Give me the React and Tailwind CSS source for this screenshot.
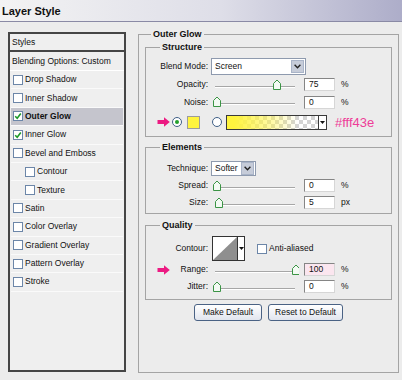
import React from 'react';

const STYLE_ITEMS = [
  { label: 'Drop Shadow' },
  { label: 'Inner Shadow' },
  { label: 'Outer Glow', checked: true, active: true },
  { label: 'Inner Glow', checked: true },
  { label: 'Bevel and Emboss' },
  { label: 'Contour', indent: true },
  { label: 'Texture', indent: true },
  { label: 'Satin' },
  { label: 'Color Overlay' },
  { label: 'Gradient Overlay' },
  { label: 'Pattern Overlay' },
  { label: 'Stroke' },
];

function Checkbox({ checked }) {
  return (
    <span className="flex h-[10px] w-[10px] shrink-0 items-center justify-center border border-[#6c86a8] bg-white">
      {checked && (
        <svg width="8" height="8" viewBox="0 0 8 8">
          <path d="M1.2 4.2 L3.2 6.2 L6.8 1.6" fill="none" stroke="#1d9a2a" strokeWidth="1.6" />
        </svg>
      )}
    </span>
  );
}

function Radio({ selected }) {
  return (
    <span className="flex h-[10px] w-[10px] shrink-0 items-center justify-center rounded-full border border-[#3f5f86] bg-white">
      {selected && <span className="h-[4px] w-[4px] rounded-full bg-[#23a02c]" />}
    </span>
  );
}

function PinkArrow() {
  return (
    <svg width="13" height="10" viewBox="0 0 13 10" className="shrink-0">
      <path d="M0.5 3 H7 V0.3 L12.8 5 L7 9.7 V7 H0.5 Z" fill="#ec1a82" />
    </svg>
  );
}

function Chevron() {
  return (
    <svg width="7" height="5" viewBox="0 0 7 5">
      <path d="M0.6 0.8 L3.5 3.8 L6.4 0.8" fill="none" stroke="#222" strokeWidth="1.4" />
    </svg>
  );
}

function TinyArrow() {
  return (
    <svg width="5" height="3" viewBox="0 0 5 3">
      <path d="M0 0 H5 L2.5 3 Z" fill="#111" />
    </svg>
  );
}

function Slider({ at }) {
  return (
    <svg width="86" height="12" viewBox="0 0 86 12" className="shrink-0">
      <line x1="2" y1="7.5" x2="82" y2="7.5" stroke="#a6a6a6" />
      <line x1="2" y1="8.5" x2="82" y2="8.5" stroke="#ffffff" />
      <path
        d={`M${at - 3.5} 10.5 V4.5 L${at} 1 L${at + 3.5} 4.5 V10.5 Z`}
        fill="#f3faf3"
        stroke="#3b9445"
      />
    </svg>
  );
}

function Label({ children, arrow }) {
  return (
    <div className="flex w-[62px] shrink-0 items-center">
      {arrow && (
        <span className="ml-[11px]">
          <PinkArrow />
        </span>
      )}
      <span className="ml-auto">{children}</span>
    </div>
  );
}

function ValueBox({ value, highlight }) {
  return (
    <div
      className={`ml-[5px] flex h-[13px] w-[31px] items-center border border-t-[#858585] border-l-[#858585] border-r-[#d6d6d6] border-b-[#d6d6d6] pl-[4px] ${highlight ? 'bg-[#fbe6ef]' : 'bg-white'}`}
    >
      {value}
    </div>
  );
}

function SliderRow({ label, at, value, unit, arrow, highlight }) {
  return (
    <div className="flex h-[17px] items-center">
      <Label arrow={arrow}>{label}</Label>
      <div className="ml-[5px] flex">
        <Slider at={at} />
      </div>
      <ValueBox value={value} highlight={highlight} />
      <span className="ml-[6px]">{unit}</span>
    </div>
  );
}

function Select({ value, className }) {
  return (
    <div className={`ml-[3px] flex items-center border border-[#8e9aae] bg-white ${className}`}>
      <span className="flex-1 pl-[3px]">{value}</span>
      <span className="mr-[1px] flex h-[13px] w-[13px] items-center justify-center border border-[#a9b4c8] bg-[#c6ccd9]">
        <Chevron />
      </span>
    </div>
  );
}

function Group({ title, children, className }) {
  return (
    <fieldset className={`border border-[#a4a4a4] ${className}`}>
      <legend className="ml-[14px] px-[2px] text-[9px] font-bold leading-[12px]">{title}</legend>
      {children}
    </fieldset>
  );
}

export default function App() {
  return (
    <div className="h-[380px] w-[402px] overflow-hidden bg-[#ececec] font-['Liberation_Sans',Arial,sans-serif] text-[8.5px] leading-[11px] text-[#111]">
      <div className="flex h-[22px] items-center border-b border-[#8a8aa5] bg-[linear-gradient(to_right,#f3f3f3,#dedee8_55%,#adadc9)] pl-[2px]">
        <span className="text-[11px] font-bold leading-[14px]">Layer Style</span>
      </div>

      <div className="flex items-start">
        {/* styles list */}
        <div className="ml-[8px] mt-[10px] flex h-[340px] w-[118px] shrink-0 flex-col border-2 border-[#454545] bg-[#efefef]">
          <div className="flex h-[18px] items-center border-b-2 border-[#454545] pl-[2px]">Styles</div>
          <div className="flex h-[19px] items-center border-b border-white pl-[2px]">Blending Options: Custom</div>
          {STYLE_ITEMS.map((item) => (
            <div
              key={item.label}
              className={`mx-[1px] flex h-[18.4px] items-center border-b border-[#fafafa] ${item.indent ? 'pl-[14px]' : 'pl-[2px]'} ${item.active ? 'bg-[#c5c5cd] font-bold' : ''}`}
            >
              <Checkbox checked={item.checked} />
              <span className="ml-[2px]">{item.label}</span>
            </div>
          ))}
        </div>

        {/* outer glow settings */}
        <fieldset className="ml-[12px] mt-[6px] h-[345px] w-[261px] shrink-0 border border-[#a4a4a4] px-[6px]">
          <legend className="ml-[6px] px-[2px] text-[9px] font-bold leading-[12px]">Outer Glow</legend>

          <Group title="Structure" className="mt-[1px] pb-[6px]">
            <div className="mt-[5px] flex h-[17px] items-center">
              <Label>Blend Mode:</Label>
              <Select value="Screen" className="h-[17px] w-[95px]" />
            </div>
            <div className="mt-[1px]">
              <SliderRow label="Opacity:" at={64} value="75" unit="%" />
            </div>
            <div className="flex h-[18px] items-center">
              <Label>Noise:</Label>
              <div className="ml-[5px] flex">
                <Slider at={4} />
              </div>
              <ValueBox value="0" />
              <span className="ml-[6px]">%</span>
            </div>
            <div className="mt-[3px] flex h-[16px] items-center pl-[11px]">
              <PinkArrow />
              <span className="ml-[2px]">
                <Radio selected />
              </span>
              <span className="ml-[5px] h-[13px] w-[13px] border border-[#9c9c9c] bg-[#fff43e]" />
              <span className="ml-[12px]">
                <Radio />
              </span>
              <div className="ml-[4px] flex h-[15px] border border-[#3a3a3a]">
                <div className="w-[91px] bg-[repeating-conic-gradient(#d4d4d4_0%_25%,#ffffff_0%_50%)] bg-size-[8px_8px]">
                  <div className="h-full w-full bg-[linear-gradient(to_right,#fff43e_8%,rgba(255,244,62,0.45)_50%,rgba(255,244,62,0)_78%)]" />
                </div>
                <div className="flex w-[8px] items-center justify-center border-l border-[#3a3a3a] bg-white">
                  <TinyArrow />
                </div>
              </div>
              <span className="ml-[8px] text-[13px] leading-[15px] text-[#ee3d98]">#fff43e</span>
            </div>
          </Group>

          <Group title="Elements" className="mt-[4px] pb-[2px]">
            <div className="mt-[8px] flex h-[15px] items-center">
              <Label>Technique:</Label>
              <Select value="Softer" className="h-[15px] w-[45px]" />
            </div>
            <div className="mt-[1px]">
              <SliderRow label="Spread:" at={4} value="0" unit="%" />
            </div>
            <SliderRow label="Size:" at={6} value="5" unit="px" />
          </Group>

          <Group title="Quality" className="mt-[5px] pb-[4px]">
            <div className="mt-[5px] flex h-[25px] items-center">
              <Label>Contour:</Label>
              <div className="ml-[4px] flex h-[25px] border border-[#333] bg-white">
                <svg width="24" height="23" viewBox="0 0 24 23">
                  <path d="M0 23 L24 0 V23 Z" fill="#8f8f8f" />
                </svg>
                <div className="flex w-[7px] items-center justify-center border-l border-[#333]">
                  <TinyArrow />
                </div>
              </div>
              <span className="ml-[12px]">
                <Checkbox />
              </span>
              <span className="ml-[2px]">Anti-aliased</span>
            </div>
            <SliderRow label="Range:" at={83} value="100" unit="%" arrow highlight />
            <SliderRow label="Jitter:" at={4} value="0" unit="%" />
          </Group>

          <div className="mt-[4px] flex justify-center gap-[6px]">
            <button
              type="button"
              className="h-[17px] w-[68px] rounded-[3px] border border-[#4a6284] bg-[linear-gradient(#ffffff,#e1e5ee)] text-[8.5px]"
            >
              Make Default
            </button>
            <button
              type="button"
              className="h-[17px] w-[75px] rounded-[3px] border border-[#4a6284] bg-[linear-gradient(#ffffff,#e1e5ee)] text-[8.5px]"
            >
              Reset to Default
            </button>
          </div>
        </fieldset>
      </div>
    </div>
  );
}
